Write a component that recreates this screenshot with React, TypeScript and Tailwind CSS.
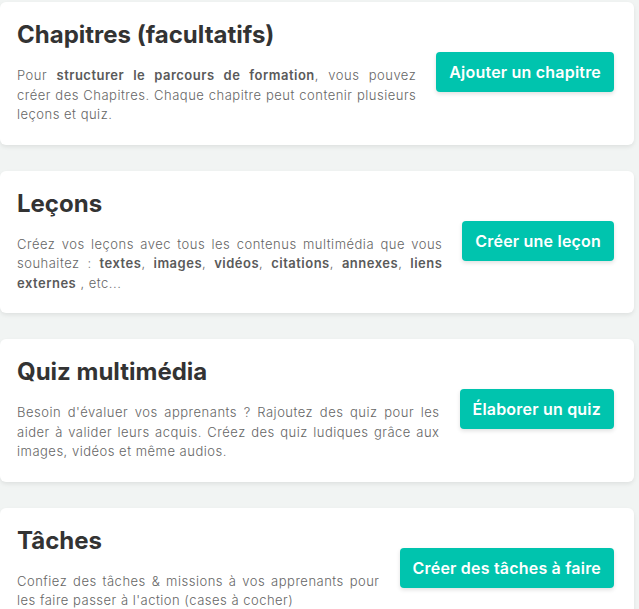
import React from "react";

type Section = {
  title: string;
  body: React.ReactNode;
  action: string;
};

const B = ({ children }: { children: React.ReactNode }) => (
  <strong className="font-semibold text-[#5a5a5a]">{children}</strong>
);

const sections: Section[] = [
  {
    title: "Chapitres (facultatifs)",
    body: (
      <>
        Pour <B>structurer le parcours de formation</B>, vous pouvez créer des Chapitres. Chaque chapitre peut
        contenir plusieurs leçons et quiz.
      </>
    ),
    action: "Ajouter un chapitre",
  },
  {
    title: "Leçons",
    body: (
      <>
        Créez vos leçons avec tous les contenus multimédia que vous souhaitez : <B>textes</B>, <B>images</B>,{" "}
        <B>vidéos</B>, <B>citations</B>, <B>annexes</B>, <B>liens externes</B> , etc...
      </>
    ),
    action: "Créer une leçon",
  },
  {
    title: "Quiz multimédia",
    body: (
      <>
        Besoin d'évaluer vos apprenants ? Rajoutez des quiz pour les aider à valider leurs acquis. Créez des quiz
        ludiques grâce aux images, vidéos et même audios.
      </>
    ),
    action: "Élaborer un quiz",
  },
  {
    title: "Tâches",
    body: <>Confiez des tâches &amp; missions à vos apprenants pour les faire passer à l'action (cases à cocher)</>,
    action: "Créer des tâches à faire",
  },
];

export default function App() {
  return (
    <div className="min-h-screen bg-[#f1f4f3] pr-[5px] pt-[2px] font-['Inter',sans-serif]">
      <div className="flex flex-col gap-[26px]">
        {sections.map((s) => (
          <div
            key={s.title}
            className="flex items-center gap-5 rounded-md bg-white pl-[17px] pr-5 pt-[18px] pb-5 shadow-[0_2px_4px_rgba(0,0,0,0.08)]"
          >
            <div className="flex-1">
              <h2 className="text-[24px] font-bold leading-[29px] text-[#333]">{s.title}</h2>
              <p className="mt-[17px] text-justify text-[13px] font-light leading-[19.5px] tracking-[0.5px] text-[#666]">
                {s.body}
              </p>
            </div>
            <button className="h-10 shrink-0 rounded-[4px] bg-[#00c4ae] px-[13px] text-[16px] font-semibold leading-5 tracking-[0.2px] text-white shadow-[0_2px_4px_rgba(0,0,0,0.12)]">
              {s.action}
            </button>
          </div>
        ))}
      </div>
    </div>
  );
}
